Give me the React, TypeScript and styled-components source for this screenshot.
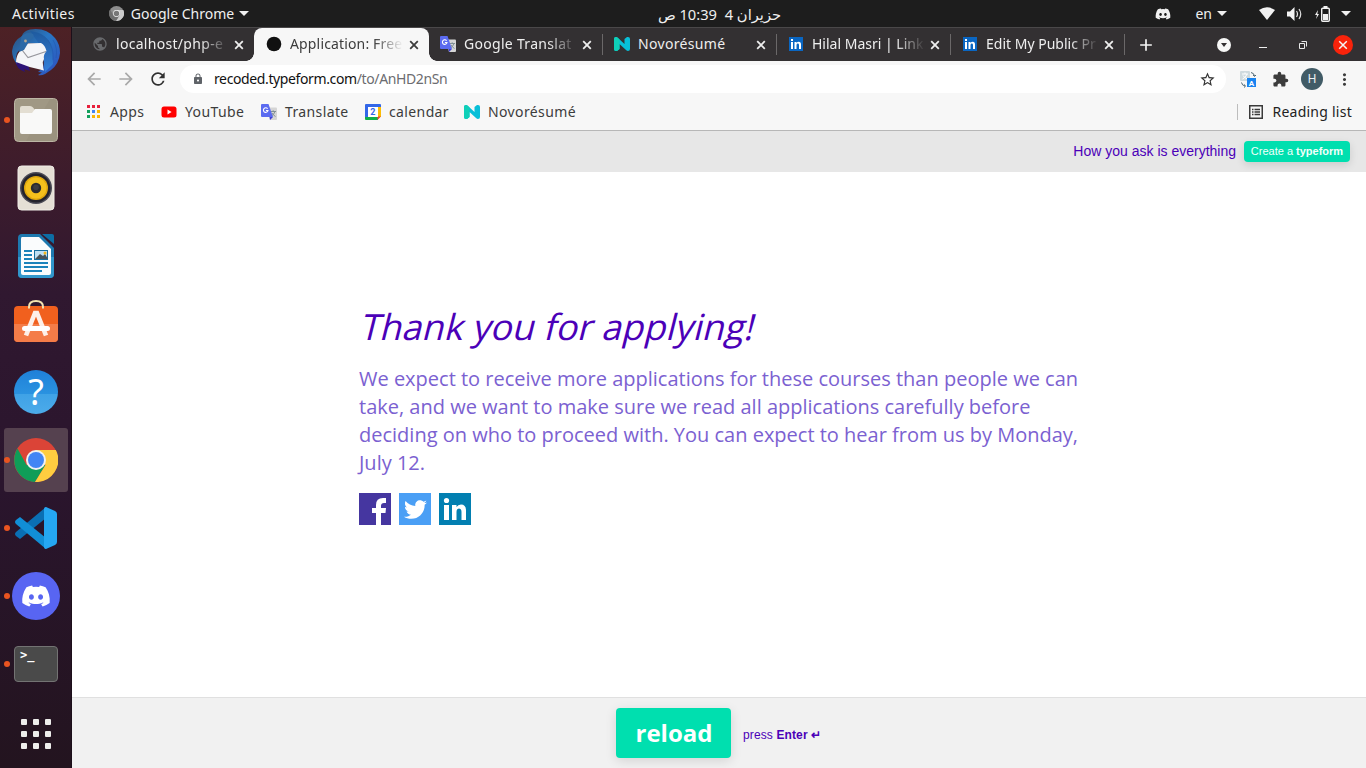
import React from "react";
import styled, { createGlobalStyle } from "styled-components";
import { FaDiscord, FaTwitter } from "react-icons/fa";
import {
  MdArrowBack, MdArrowForward, MdRefresh, MdLock, MdStarBorder, MdExtension,
  MdMoreVert, MdPublic, MdAdd,
} from "react-icons/md";

const Global = createGlobalStyle`
  * { box-sizing: border-box; }
  body { margin: 0; overflow: hidden; font-family: "Noto Sans", "Liberation Sans", sans-serif; }
  svg { display: block; flex: none; }
`;

const Desktop = styled.div`
  width: 1366px; height: 768px; display: flex; flex-direction: column; background: #fff;
`;

const TopBar = styled.header`
  height: 27px; flex: none; background: #1d1d1d; color: #f0f0f0; font-size: 14px;
  display: grid; grid-template-columns: 1fr auto 1fr; align-items: center;
`;
const BarSide = styled.div`display: flex; align-items: center; height: 27px;`;
const BarRight = styled(BarSide)`justify-content: flex-end; padding-right: 15px;`;
const Label = styled.span<{ $ls?: number; $ml?: number }>`
  white-space: nowrap; letter-spacing: ${p => p.$ls ?? 0}px; margin-left: ${p => p.$ml ?? 0}px;
`;
const Clock = styled.div`
  font-family: "Noto Sans", "DejaVu Sans", sans-serif; font-size: 14.7px; white-space: pre; direction: rtl; padding-left: 73px;
`;
const Caret = styled.i<{ $ml: number }>`
  width: 0; height: 0; margin-left: ${p => p.$ml}px;
  border: 5px solid transparent; border-top-color: #f0f0f0; border-bottom: 0;
`;
const Spacer = styled.span<{ $w: number }>`width: ${p => p.$w}px; flex: none;`;

const Below = styled.div`flex: 1; display: flex; min-height: 0;`;

const Dock = styled.nav`
  width: 72px; flex: none; overflow: hidden; padding: 0 4px 2px;
  display: flex; flex-direction: column; justify-content: flex-end; gap: 4px;
  background: linear-gradient(#4d2125 0%, #3d1c2c 20%, #301830 36%, #2a152d 62%, #23141f 100%);
  border-right: 1px solid #1c0f1a;
`;
const Slot = styled.div<{ $active?: boolean; $gap?: number }>`
  height: 64px; flex: none; border-radius: 3px; position: relative;
  display: flex; align-items: center; justify-content: center;
  margin-top: ${p => p.$gap ?? 0}px;
  margin-right: -1px;
  background: ${p => (p.$active ? "#55414f" : "transparent")};
`;
const Running = styled.i`
  position: absolute; left: 0; top: 29px; width: 6px; height: 6px; border-radius: 50%; background: #e95420;
`;

const Browser = styled.div`flex: 1; min-width: 0; display: flex; flex-direction: column;`;

const TabStrip = styled.div`
  height: 34px; flex: none; background: #333032; border-top: 1px solid #4a4849;
  padding-left: 8px; display: flex;
`;
const TabBox = styled.div<{ $active?: boolean; $line?: boolean }>`
  width: ${p => (p.$active ? 175 : 174)}px; margin-right: ${p => (p.$active ? -1 : 0)}px;
  height: 33px; padding: 0 8px 0 12px; display: flex; align-items: center; position: relative;
  color: ${p => (p.$active ? "#3c3c3c" : "#eeeeee")};
  background: ${p => (p.$active ? "#f7f7f7" : "transparent")};
  border-radius: 8px 8px 0 0;
  ${p => p.$line && "&::after { content: ''; position: absolute; right: -0.5px; top: 6px; width: 1px; height: 21px; background: #6b6869; }"}
  ${p => p.$active && `
    &::before, &::after { content: ""; position: absolute; bottom: 0; width: 8px; height: 8px; }
    &::before { left: -8px; background: radial-gradient(circle at 0 0, transparent 7.5px, #f7f7f7 8px); }
    &::after { right: -8px; background: radial-gradient(circle at 100% 0, transparent 7.5px, #f7f7f7 8px); }
  `}
`;
const TabTitle = styled.span<{ $ls?: number; $fade?: boolean }>`
  width: 114px; margin-left: 8px; padding-bottom: 2px; white-space: nowrap; font-size: 14px; line-height: 22px;
  letter-spacing: ${p => p.$ls ?? 0}px;
  ${p => p.$fade && "mask-image: linear-gradient(to right, #000 84px, transparent 113px);"}
`;
const TabClose = styled.span`margin-left: 5px; display: flex;`;
const StripTools = styled.div`
  flex: 1; display: flex; align-items: center; color: #f5f5f5; padding-left: 12px; padding-right: 13px;
`;
const DownBadge = styled.span`
  width: 14px; height: 14px; border-radius: 50%; background: #f7f7f7; margin-left: auto;
  display: flex; align-items: center; justify-content: center;
  &::after { content: ""; border: 3.5px solid transparent; border-top: 4px solid #333032; border-bottom: 0; }
`;
const Minimize = styled.span`width: 8px; height: 1px; background: #eee; margin: 5px 32px 0 28px;`;
const CloseWindow = styled.span`
  width: 20px; height: 20px; border-radius: 50%; background: #f9230b; margin-left: 26px;
  display: flex; align-items: center; justify-content: center;
`;

const Toolbar = styled.div`
  height: 36px; flex: none; background: #f7f7f7; display: flex; align-items: center; padding: 0 12px; color: #3c3c3c;
`;
const NavIcon = styled.span<{ $dim?: boolean }>`
  width: 20px; margin-right: 12px; font-size: 20px; display: flex; justify-content: center;
  color: ${p => (p.$dim ? "#a9a9a9" : "#303030")};
`;
const Omnibox = styled.div`
  flex: 1; height: 28px; margin: 0 14px 0 0; border-radius: 14px; background: #fff;
  display: flex; align-items: center; padding: 0 10px 0 12px; font-size: 14px; color: #6c6c70;
`;
const Url = styled.span`
  flex: 1; margin-left: 10px; padding-bottom: 2px; letter-spacing: -0.38px; white-space: nowrap;
  b { font-weight: 400; color: #111; }
`;
const Avatar = styled.span`
  width: 22px; height: 22px; border-radius: 50%; background: #415b66; color: #e9eef0;
  font: 12px Roboto, sans-serif; display: flex; align-items: center; justify-content: center; margin-left: 12px;
`;
const Bookmarks = styled.div`
  height: 34px; flex: none; background: #f7f7f7; border-bottom: 1px solid #b7b7b7;
  display: flex; align-items: center; padding: 0 14px 3px 14px; font-size: 14px; color: #3c3c3c;
`;
const Bookmark = styled.span<{ $w: number }>`
  width: ${p => p.$w}px; flex: none; display: flex; align-items: center; gap: 8px;
  white-space: nowrap; letter-spacing: 0.38px;
`;
const Lift = styled.span`padding-bottom: 2px;`;
const ReadingList = styled.span`
  margin-left: auto; height: 16px; border-left: 1px solid #bdbdbd; padding-left: 11px; color: #222;
  display: flex; align-items: center; gap: 9px; white-space: nowrap; letter-spacing: 0.25px;
`;

const Banner = styled.div`
  height: 41px; flex: none; background: #e7e7e7; display: flex; align-items: center; justify-content: flex-end;
  padding-right: 16px; font: 14px "Liberation Sans", Arial, sans-serif; color: #4b00b8;
`;
const Create = styled.button`
  margin: 0 0 0 8px; width: 106px; height: 21px; padding: 0 0 1px; border: 0; border-radius: 4px; background: #00dfaf; color: #f2fffb;
  font: 11px "Liberation Sans", Arial, sans-serif; white-space: nowrap; box-shadow: 0 3px 8px rgba(0,0,0,.12);
`;
const Page = styled.main`
  flex: 1; background: #fff; padding: 131px 0 0 287px; font-family: "Open Sans", sans-serif;
`;
const Title = styled.h1`
  margin: 0; font-size: 36px; line-height: 48px; font-weight: 400; color: #4b00b8; letter-spacing: 0.04px;
  white-space: nowrap; width: max-content; transform: skewX(-14deg); transform-origin: 0 37px;
`;
const Copy = styled.p`
  margin: 14px 0 16px; width: 722px; font-size: 20px; line-height: 28px; color: #7b61d1; white-space: pre;
`;
const Socials = styled.div`display: flex; gap: 8px;`;
const Social = styled.span<{ $bg: string }>`
  width: 32px; height: 32px; background: ${p => p.$bg}; color: #fff; display: flex; align-items: center; justify-content: center;
`;
const Footer = styled.footer`
  height: 71px; flex: none; background: #f1f1f1; border-top: 1px solid #e0e0e0; display: flex; align-items: center;
  padding-left: 544px; font: 12px "Liberation Sans", Arial, sans-serif; color: #4b00b8;
`;
const Hint = styled.span`padding-top: 3px; letter-spacing: 0.12px;`;
const Reload = styled.button`
  width: 115px; height: 50px; border: 0; border-radius: 4px; background: #00dfaf; color: #fff; padding: 0 0 2px 1px;
  font: 700 24px "Open Sans", sans-serif; margin: 0 12px 0 0; box-shadow: 0 3px 12px rgba(0,0,0,.12);
`;

const Cross = ({ size = 14, w = 1.8 }: { size?: number; w?: number }) => (
  <svg width={size} height={size} viewBox="0 0 14 14">
    <path d="M3.200 3.200L10.800 10.800M10.800 3.200L3.200 10.800" stroke="currentColor" strokeWidth={w} />
  </svg>
);
const Novo = () => (
  <svg width="16" height="14" viewBox="0 0 16 14">
    <path d="M0 2Q0 0 2 0Q3 0 4 1L10.500 7V2L13 0H14Q16 0 16 2V12Q16 14 14 14Q13 14 12 13L5.500 7V12L3 14H2Q0 14 0 12Z" fill="#08bfd8" />
    <path d="M0 2Q0 0 2 0Q3 0 4 1L5.500 2.400V12L3 14H2Q0 14 0 12Z" fill="#0fd0b8" />
  </svg>
);
const LinkedIn = () => (
  <svg width="14" height="14" viewBox="0 0 14 14">
    <rect width="14" height="14" fill="#0a66c2" />
    <path d="M2 5h2v7H2zM2 2h2v2H2zM5.500 5h2v1q.8-1.200 2.300-1.200Q12 4.800 12 7.500V12h-2V8q0-1.400-1.200-1.400T7.500 8v4h-2z" fill="#fff" />
  </svg>
);
const TranslateIcon = () => (
  <svg width="16" height="16" viewBox="0 0 16 16">
    <path d="M6 3.500h9a1 1 0 0 1 1 1V15a1 1 0 0 1-1 1H9z" fill="#d5d5d5" />
    <path d="M9.500 7.500h5.500M12.200 6.300v1.200M14 7.500q-1 3-3.500 4.500M11 9q1 2 3.500 3.500" stroke="#77898f" fill="none" strokeWidth=".9" />
    <path d="M1 0h6.500l4.500 13H1a1 1 0 0 1-1-1V1a1 1 0 0 1 1-1z" fill="#5b6bf0" />
    <path d="M8.500 13H12l-3 3z" fill="#3f3fd0" />
    <path d="M6.600 4.700A2.300 2.300 0 1 0 7 6.500H4.900" stroke="#fff" fill="none" strokeWidth="1.100" />
  </svg>
);
const AppsIcon = () => {
  const c = ["#e8203c", "#e8203c", "#e8203c", "#12a05c", "#4285f4", "#fbb605", "#12a05c", "#fbb605", "#fbb605"];
  return (
    <svg width="16" height="14" viewBox="0 0 16 14">
      {c.map((f, i) => <rect key={i} x={1 + (i % 3) * 5} y={Math.floor(i / 3) * 5} width="3" height="3" fill={f} />)}
    </svg>
  );
};
const YouTubeIcon = () => (
  <svg width="16" height="16" viewBox="0 0 16 16">
    <rect x=".5" y="2.500" width="15" height="11" rx="2.500" fill="#f00" /><path d="M6.500 5.600v4.800L10.600 8z" fill="#fff" />
  </svg>
);
const CalendarIcon = () => (
  <svg width="16" height="16" viewBox="0 0 16 16">
    <path d="M1 0h14a1 1 0 0 1 1 1v3H0V1a1 1 0 0 1 1-1z" fill="#3367e8" />
    <path d="M0 3h3v10H0z" fill="#3367e8" /><path d="M13 3h3v10h-3z" fill="#fbbc04" />
    <path d="M0 13h13v3H1a1 1 0 0 1-1-1z" fill="#0fae48" /><path d="M12.500 12.500H16L12.500 16z" fill="#ea4335" />
    <path d="M3 3h10v10H3z" fill="#fff" />
    <text x="8" y="11.200" textAnchor="middle" fontSize="9" fontWeight="700" fontFamily="Roboto" fill="#3367e8">2</text>
  </svg>
);
const ListIcon = () => (
  <svg width="14" height="14" viewBox="0 0 14 14">
    <rect x=".75" y=".75" width="12.500" height="12.500" fill="none" stroke="#3a3a3a" strokeWidth="1.500" />
    <path d="M3 4.500h1.500M3 7h1.500M3 9.500h1.500M5.500 4.500H11M5.500 7H11M5.500 9.500H11" stroke="#3a3a3a" strokeWidth="1.400" />
  </svg>
);
const TranslateExt = () => (
  <svg width="17" height="17" viewBox="0 0 17 17">
    <rect width="10" height="10" rx="1" fill="#cfdade" />
    <path d="M2 3h6M5 1.500V3M7 3Q6 6.500 2.500 8M3 4.500Q4.500 7 7.500 8" stroke="#fff" fill="none" />
    <rect x="7" y="7" width="9" height="9" fill="#1a84f0" />
    <text x="11.500" y="14.500" textAnchor="middle" fontSize="8" fontWeight="700" fontFamily="Roboto" fill="#fff">A</text>
    <path d="M11 1.500q3 .5 3.500 3.500M13 4l1.600 1.400L16 4M1.500 11.500q.5 3 3.500 3.500M4 13.500L5.600 15 4 16.500" stroke="#4f6874" fill="none" />
  </svg>
);
const Thunderbird = () => (
  <svg width="48" height="48" viewBox="0 0 48 48">
    <defs>
      <linearGradient id="tb" x1="0" y1="0" x2="1" y2="1">
        <stop offset="0" stopColor="#2c4a70" /><stop offset=".45" stopColor="#2876c4" /><stop offset="1" stopColor="#2f4fc0" />
      </linearGradient>
      <linearGradient id="tw" x1="0" y1="0" x2="0" y2="1">
        <stop offset="0" stopColor="#1e5a9e" /><stop offset="1" stopColor="#3580dc" />
      </linearGradient>
    </defs>
    <path d="M3 32Q4 41 13 44L12 41Q15 42 18 43L16 37Z" fill="#2c1377" />
    <path d="M10 8Q11 3 18 1.500Q34-1 43 10Q48 16 48 25Q47 36 39 42L33 46Q29 48 26 47L30 44.500L26 44L31 40L34 24L30 16L13 15L5 25Q3 31 5 36Q0 30 0 23Q1 13 10 8Z" fill="url(#tb)" />
    <path d="M18 3Q36 5 40 20L41 36L33 44L30 20Z" fill="url(#tw)" />
    <path d="M13 15.500L29 15Q33 17 34.500 23Q31 27 32 31Q30 34 31 37Q31 40 32 42.500Q18 40 4 34Q4 28 8 23Z" fill="#f4f5f8" />
    <path d="M8.500 20L16 29.500L34 23.500" fill="none" stroke="#96969c" strokeWidth="1.100" />
    <path d="M9.500 8.500Q14 3 21 6Q23 9 18 12L12 22L7 24Q8 16 9.500 8.500Z" fill="#2c69a6" />
    <circle cx="13.500" cy="13" r="1.400" fill="#b7a890" />
    <path d="M36 12Q42 20 41 32M41 12Q46 20 44 30" fill="none" stroke="#1f55a8" strokeWidth=".8" opacity=".6" />
  </svg>
);
const Files = () => (
  <svg width="44" height="44" viewBox="0 0 44 44">
    <rect x=".5" y=".5" width="43" height="43" rx="4" fill="#a09884" stroke="#bdb6a5" />
    <path d="M43 1v42H12L36 1z" fill="#938b78" opacity=".4" />
    <path d="M6 10q0-2 2-2h8q2 0 3 1.500L21 12v8H6z" fill="#e3ded2" />
    <path d="M6 15h12l3-4h15q2 0 2 2v21q0 2-2 2H8q-2 0-2-2z" fill="#f9f9f8" />
  </svg>
);
const Rhythmbox = () => (
  <svg width="38" height="46" viewBox="0 0 38 46">
    <rect x="1" y="1" width="36" height="44" rx="3.500" fill="#e5dfd5" stroke="#f0ede7" />
    <circle cx="19" cy="23" r="16" fill="#4b4a55" /><circle cx="19" cy="23" r="14.500" fill="#24232c" />
    <circle cx="19" cy="23" r="12" fill="#e0a80f" /><circle cx="19" cy="23" r="10.500" fill="#f4c01c" />
    <circle cx="19" cy="23" r="5.200" fill="#2b2b2f" /><circle cx="19" cy="22.200" r="2.800" fill="#3d3d42" />
  </svg>
);
const Writer = () => (
  <svg width="38" height="46" viewBox="0 0 38 46">
    <path d="M5 1h18l14 14v26q0 4-4 4H5q-4 0-4-4V5q0-4 4-4z" fill="#1d79af" />
    <path d="M1 24h36v17q0 4-4 4H5q-4 0-4-4z" fill="#3197cc" />
    <path d="M5 4h17l12 12v24q0 2-2 2H6q-2 0-2-2V6q0-2 1-2z" fill="#fafcfd" />
    <path d="M25 1h10q2 0 2 2v8z" fill="#0d6ea5" />
    <path d="M7 18h8M7 22h8M7 26h8M7 30h24M7 34h24M7 38h18" stroke="#1b83bb" strokeWidth="2" />
    <rect x="17.500" y="17.500" width="13" height="9" fill="#bfe0f3" stroke="#176f9e" />
    <path d="M18 26l5-5 3 2 2-2 3 5z" fill="#47545b" /><circle cx="28" cy="20" r="1.500" fill="#f2b71c" />
  </svg>
);
const Software = () => (
  <svg width="46" height="50" viewBox="0 0 46 50">
    <rect x="1" y="7" width="44" height="36" rx="4" fill="#f1601e" />
    <path d="M1 25h44v14q0 4-4 4H5q-4 0-4-4z" fill="#f47c48" />
    <path d="M16 9.500V8q0-6 7-6t7 6v1.500" fill="none" stroke="#f4e3b0" strokeWidth="2" />
    <path d="M13 36.500L22 14h2l9 22.500" fill="none" stroke="#fdf0e9" strokeWidth="4.600" />
    <rect x="9" y="27" width="28" height="5" rx="2.500" fill="#fff" />
  </svg>
);
const HelpDisc = styled.span`
  width: 44px; height: 44px; border-radius: 50%; color: #fff; font-size: 36px; line-height: 44px; text-align: center;
  background: linear-gradient(#1f80d8, #2a92e0 54%, #3fa2e6 55%, #4cabea);
`;
const Chrome = ({ size, gray }: { size: number; gray?: boolean }) => (
  <svg width={size} height={size} viewBox="0 0 44 44">
    <circle cx="22" cy="22" r="22" fill={gray ? "#8d8d8d" : "#db4437"} />
    <path d="M3.500 10.500A22 22 0 0 0 21 44L31.500 27L12.500 27Z" fill={gray ? "#6f6f6f" : "#0f9d58"} />
    <path d="M22 12H41.800A22 22 0 0 1 21 44L31.500 27Z" fill={gray ? "#cacaca" : "#ffcd40"} />
    <circle cx="22" cy="22" r="10" fill="#f1f1f1" /><circle cx="22" cy="22" r="8" fill={gray ? "#777" : "#4285f4"} />
  </svg>
);
const VSCode = () => (
  <svg width="42" height="42" viewBox="0 0 42 42">
    <path d="M31 11L5 32L1 29Q-1 27 1 25L31 0Z" fill="#0a6fb4" />
    <path d="M31 42L1 17Q-1 15 1 13L5 10L31 31Z" fill="#118ed6" />
    <path d="M31 0L40 4Q42 5 42 7V35Q42 37 40 38L31 42Q29 42 29 40V2Q29 0 31 0Z" fill="#25a7f2" />
  </svg>
);
const DiscordDisc = styled.span`
  width: 48px; height: 48px; border-radius: 50%; background: #5865f2; color: #fff; font-size: 30px;
  display: flex; align-items: center; justify-content: center;
`;
const Terminal = styled.span`
  width: 44px; height: 36px; border: 1px solid #737373; border-radius: 4px; background: #4a4a4a; color: #fff;
  font: 700 12px/12px "DejaVu Sans Mono", monospace; padding: 2px 0 0 5px;
`;
const AppGrid = styled.span`
  display: grid; grid-template-columns: repeat(3, 6px); gap: 6px;
  i { width: 6px; height: 6px; border-radius: 1px; background: #eeeeec; }
`;

interface TabData { icon: React.ReactNode; title: string; ls?: number; active?: boolean; fade?: boolean; line?: boolean; }
const tabs: TabData[] = [
  { icon: <MdPublic size={16} color="#68696c" />, title: "localhost/php-e", ls: 0.3, fade: true },
  { icon: <svg width="16" height="16"><circle cx="8" cy="8" r="7.300" fill="#111" /></svg>, title: "Application: Free", ls: 0.15, active: true, fade: true },
  { icon: <TranslateIcon />, title: "Google Translat", ls: 0.3, fade: true, line: true },
  { icon: <Novo />, title: "Novorésumé", ls: 0.32, line: true },
  { icon: <LinkedIn />, title: "Hilal Masri | Link", fade: true, line: true },
  { icon: <LinkedIn />, title: "Edit My Public Pr", fade: true, line: true },
];
const IconBox = styled.span`width: 16px; display: flex; justify-content: center; flex: none; padding-bottom: 1px;`;

const dock: { icon: React.ReactNode; run?: boolean; active?: boolean; gap?: number }[] = [
  { icon: <Thunderbird /> },
  { icon: <Files />, run: true },
  { icon: <Rhythmbox /> },
  { icon: <Writer /> },
  { icon: <Software /> },
  { icon: <HelpDisc>?</HelpDisc> },
  { icon: <Chrome size={44} />, run: true, active: true },
  { icon: <VSCode />, run: true },
  { icon: <DiscordDisc><FaDiscord /></DiscordDisc>, run: true },
  { icon: <Terminal>&gt;_</Terminal>, run: true },
  { icon: <AppGrid>{Array.from({ length: 9 }, (_, i) => <i key={i} />)}</AppGrid>, gap: 2 },
];

export default function App() {
  return (
    <Desktop>
      <Global />
      <TopBar>
        <BarSide>
          <Label $ml={12} $ls={0.45}>Activities</Label>
          <Spacer $w={34} />
          <Chrome size={15} gray />
          <Label $ml={7}>Google Chrome</Label>
          <Caret $ml={5} />
        </BarSide>
        <Clock>حزيران 4  10:39 ص</Clock>
        <BarRight>
          <FaDiscord size={16} />
          <Label $ml={24}>en</Label>
          <Caret $ml={5} />
          <Spacer $w={32} />
          <svg width="16" height="13" viewBox="0 0 16 13"><path d="M0 3Q8-2.500 16 3L8 13Z" fill="#f2f2f2" /></svg>
          <Spacer $w={12} />
          <svg width="16" height="14" viewBox="0 0 16 14">
            <path d="M0 4.500h3L7.500 0v14L3 9.500H0z" fill="#f2f2f2" />
            <path d="M9.500 4q2 3 0 6M12 2q3.500 5 0 10" fill="none" stroke="#e0e0e0" strokeWidth="1.200" />
          </svg>
          <Spacer $w={12} />
          <svg width="15" height="16" viewBox="0 0 15 16">
            <path d="M3 4L0 9h2l-1 4 3-5H2.300z" fill="#f2f2f2" />
            <rect x="6.700" y="2.200" width="7.600" height="13" rx="1" fill="none" stroke="#f2f2f2" strokeWidth="1.400" />
            <path d="M8.500 0h4v2h-4zM8 8h5v6H8z" fill="#f2f2f2" />
          </svg>
          <Caret $ml={11} />
        </BarRight>
      </TopBar>
      <Below>
        <Dock>
          {dock.map((d, i) => (
            <Slot key={i} $active={d.active} $gap={d.gap}>{d.run && <Running />}{d.icon}</Slot>
          ))}
        </Dock>
        <Browser>
          <TabStrip>
            {tabs.map(t => (
              <TabBox key={t.title} $active={t.active} $line={t.line}>
                <IconBox>{t.icon}</IconBox>
                <TabTitle $ls={t.ls} $fade={t.fade}>{t.title}</TabTitle>
                <TabClose><Cross /></TabClose>
              </TabBox>
            ))}
            <StripTools>
              <MdAdd size={20} />
              <DownBadge />
              <Minimize />
              <svg width="8" height="8" viewBox="0 0 8 8"><path d="M.5 2.500h5v5h-5zM2.500.5h5v5" fill="none" stroke="#e8e8e8" /></svg>
              <CloseWindow><Cross w={1.5} /></CloseWindow>
            </StripTools>
          </TabStrip>
          <Toolbar>
            <NavIcon $dim><MdArrowBack /></NavIcon>
            <NavIcon $dim><MdArrowForward /></NavIcon>
            <NavIcon><MdRefresh /></NavIcon>
            <Omnibox>
              <MdLock size={12} color="#5f6368" />
              <Url><b>recoded.typeform.com</b>/to/AnHD2nSn</Url>
              <MdStarBorder size={17} color="#333" />
            </Omnibox>
            <TranslateExt />
            <Spacer $w={15} />
            <MdExtension size={17} />
            <Avatar>H</Avatar>
            <Spacer $w={12} />
            <MdMoreVert size={19} />
          </Toolbar>
          <Bookmarks>
            <Bookmark $w={75}><AppsIcon /><Lift>Apps</Lift></Bookmark>
            <Bookmark $w={100}><YouTubeIcon /><Lift>YouTube</Lift></Bookmark>
            <Bookmark $w={104}><TranslateIcon /><Lift>Translate</Lift></Bookmark>
            <Bookmark $w={99}><CalendarIcon /><Lift>calendar</Lift></Bookmark>
            <Bookmark $w={120}><Novo /><Lift>Novorésumé</Lift></Bookmark>
            <ReadingList><ListIcon /><Lift>Reading list</Lift></ReadingList>
          </Bookmarks>
          <Banner>
            <Lift>How you ask is everything</Lift>
            <Create>Create a <b>typeform</b></Create>
          </Banner>
          <Page>
            <Title>Thank you for applying!</Title>
            <Copy>{"We expect to receive more applications for these courses than people we can\ntake, and we want to make sure we read all applications carefully before\ndeciding on who to proceed with. You can expect to hear from us by Monday,\nJuly 12."}</Copy>
            <Socials>
              <Social $bg="#4536a0">
                <svg width="32" height="32" viewBox="0 0 32 32"><path d="M17 32V20h-4v-5h4v-3q0-7 7-7h3v5h-2q-3 0-3 3v2h5l-.5 5H22v12z" fill="#fff" /></svg>
              </Social>
              <Social $bg="#4a9ff5"><FaTwitter size={23} /></Social>
              <Social $bg="#027fb1">
                <svg width="32" height="32" viewBox="0 0 32 32">
                  <circle cx="7.500" cy="7.500" r="2.600" fill="#fff" />
                  <path d="M5 12h5v15H5zM13 12h4.500v2q1.500-2.500 4.500-2.500 5 0 5 6V27h-4.500v-8q0-3.500-2.500-3.500T17.500 19v8H13z" fill="#fff" />
                </svg>
              </Social>
            </Socials>
          </Page>
          <Footer>
            <Reload>reload</Reload>
            <Hint>press <b>Enter ↵</b></Hint>
          </Footer>
        </Browser>
      </Below>
    </Desktop>
  );
}
